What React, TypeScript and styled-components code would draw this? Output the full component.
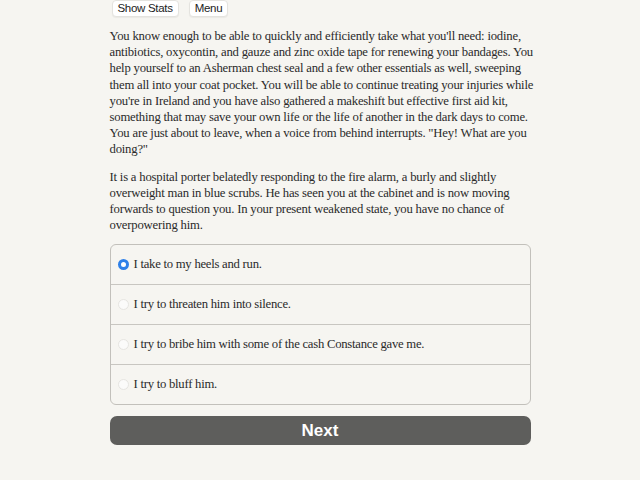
import * as React from "react"
import styled, { createGlobalStyle } from "styled-components"

const GlobalStyle = createGlobalStyle`
    html, body {
        margin: 0;
        padding: 0;
        background: #f6f5f1;
    }
    body {
        font-family: "Liberation Serif", "Times New Roman", serif;
        color: #2a2a2a;
    }
`

const Page = styled.div`
    width: 421px;
    margin: 0 auto;
`

const Header = styled.div`
    display: flex;
    gap: 10px;
    padding-left: 2px;
`

const HeaderButton = styled.button`
    font-family: "Liberation Sans", Arial, sans-serif;
    font-size: 11.5px;
    letter-spacing: -0.3px;
    color: #222;
    background: #fff;
    border: 1px solid #e4e3df;
    border-radius: 4px;
    height: 17px;
    padding: 0 5px;
    line-height: 15px;
    box-shadow: 0 1px 1px rgba(0, 0, 0, 0.05);
`

const Story = styled.div`
    margin-top: 11px;
    font-size: 12.7px;
    letter-spacing: -0.2px;
    line-height: 16.2px;
`

const Para = styled.p`
    margin: 0 0 11px 0;
`

const Line = styled.span`
    display: block;
    white-space: nowrap;
`

const ChoiceList = styled.div`
    margin-top: 11px;
    border: 1px solid #c2c0bb;
    border-radius: 6px;
    overflow: hidden;
`

const ChoiceRow = styled.label`
    display: flex;
    align-items: center;
    height: 39px;
    padding-left: 7px;
    font-size: 12.7px;
    letter-spacing: -0.25px;
    border-top: 1px solid #c8c6c1;

    &:first-child {
        border-top: none;
    }
`

const Radio = styled.span<{ checked: boolean }>`
    box-sizing: border-box;
    width: 11px;
    height: 11px;
    border-radius: 50%;
    margin-right: 5px;
    flex: 0 0 auto;
    background: ${p => (p.checked ? "#fff" : "#fbfbfa")};
    border: ${p => (p.checked ? "3px solid #2f80e8" : "1px solid #e6e5e1")};
`

const NextButton = styled.button`
    display: block;
    width: 100%;
    height: 29px;
    margin-top: 11px;
    border: none;
    border-radius: 7px;
    background: #5e5e5c;
    color: #fff;
    font-family: "Liberation Sans", Arial, sans-serif;
    font-weight: bold;
    font-size: 17px;
`

const paragraphs = [
    [
        "You know enough to be able to quickly and efficiently take what you'll need: iodine,",
        "antibiotics, oxycontin, and gauze and zinc oxide tape for renewing your bandages. You",
        "help yourself to an Asherman chest seal and a few other essentials as well, sweeping",
        "them all into your coat pocket. You will be able to continue treating your injuries while",
        "you're in Ireland and you have also gathered a makeshift but effective first aid kit,",
        "something that may save your own life or the life of another in the dark days to come.",
        "You are just about to leave, when a voice from behind interrupts. \"Hey! What are you",
        "doing?\"",
    ],
    [
        "It is a hospital porter belatedly responding to the fire alarm, a burly and slightly",
        "overweight man in blue scrubs. He has seen you at the cabinet and is now moving",
        "forwards to question you. In your present weakened state, you have no chance of",
        "overpowering him.",
    ],
]

const choices = [
    "I take to my heels and run.",
    "I try to threaten him into silence.",
    "I try to bribe him with some of the cash Constance gave me.",
    "I try to bluff him.",
]

export default function App(): JSX.Element {
    const [selected, setSelected] = React.useState(0)
    return (
        <Page>
            <GlobalStyle />
            <Header>
                <HeaderButton>Show Stats</HeaderButton>
                <HeaderButton>Menu</HeaderButton>
            </Header>
            <Story>
                {paragraphs.map((lines, i) => (
                    <Para key={i}>
                        {lines.map((l, j) => (
                            <Line key={j}>{l}</Line>
                        ))}
                    </Para>
                ))}
            </Story>
            <ChoiceList>
                {choices.map((c, i) => (
                    <ChoiceRow key={i} onClick={() => setSelected(i)}>
                        <Radio checked={selected === i} />
                        {c}
                    </ChoiceRow>
                ))}
            </ChoiceList>
            <NextButton>Next</NextButton>
        </Page>
    )
}
